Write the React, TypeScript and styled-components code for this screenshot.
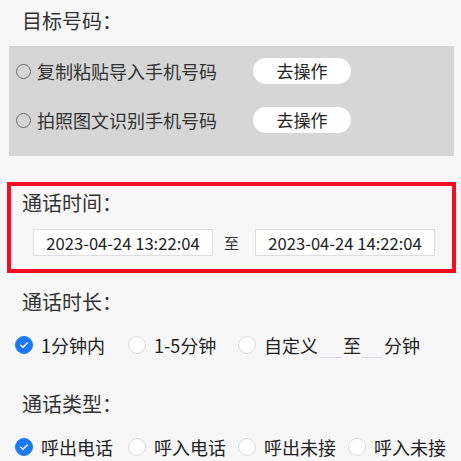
import React from 'react';
import styled, { createGlobalStyle } from 'styled-components';

const GlobalStyle = createGlobalStyle`
    html, body {
        margin: 0;
        padding: 0;
        background: #f7f7f7;
        font-family: 'Noto Sans CJK SC', 'Noto Sans', sans-serif;
        color: #333;
    }
    * { box-sizing: border-box; }
`;

// --- Layout ---

const Page = styled.div`
    width: 461px;
    padding-top: 7px;
`;

const SectionTitle = styled.div<{ $top?: number; $indent?: number }>`
    font-size: 20px;
    line-height: 28px;
    color: #333;
    padding-left: ${p => (p.$indent ?? 22)}px;
    margin-top: ${p => p.$top || 0}px;
`;

// --- Target numbers ---

const ImportBox = styled.div`
    margin: 11px 7px 0 9px;
    background: #d6d6d6;
    padding: 12px 0 23px 7px;
    display: flex;
    flex-direction: column;
    gap: 23px;
`;

const ImportRow = styled.div`
    display: flex;
    align-items: center;
    height: 26px;
`;

const ImportLabel = styled.label`
    width: 237px;
    display: flex;
    align-items: center;
    gap: 6px;
    font-size: 18px;
    color: #333;
`;

const HollowRadio = styled.span`
    width: 15px;
    height: 15px;
    border-radius: 50%;
    border: 1.5px solid #6a6a6a;
    flex-shrink: 0;
`;

const ActionButton = styled.button`
    width: 98px;
    height: 26px;
    border: none;
    border-radius: 13px;
    background: #fff;
    font-family: inherit;
    font-size: 17px;
    line-height: 26px;
    color: #222;
    padding: 0;
`;

// --- Call time ---

const TimeBox = styled.div`
    margin: 26px 5px 0 7px;
    border: 4px solid #f50c22;
    padding: 3px 0 13px 11px;
`;

const TimeRange = styled.div`
    display: flex;
    align-items: center;
    margin-top: 12px;
    padding-left: 11px;
`;

const DateField = styled.input`
    width: 180px;
    height: 27px;
    border: 1px solid #dedede;
    background: #fff;
    font-family: inherit;
    font-size: 16.6px;
    color: #222;
    text-align: center;
    padding: 0;
    outline: none;
`;

const RangeSep = styled.span`
    font-size: 15px;
    color: #333;
    margin: 0 16px 0 11px;
`;

// --- Options ---

const OptionRow = styled.div`
    display: flex;
    align-items: center;
    height: 28px;
    margin-top: 15px;
    padding-left: 15px;
    font-size: 18px;
    color: #222;
    white-space: nowrap;
`;

const Option = styled.label<{ $width?: number }>`
    display: flex;
    align-items: center;
    gap: 8px;
    width: ${p => (p.$width ? `${p.$width}px` : 'auto')};
    flex-shrink: 0;
`;

const Dot = styled.span<{ $checked?: boolean }>`
    width: 18px;
    height: 18px;
    border-radius: 50%;
    flex-shrink: 0;
    display: flex;
    align-items: center;
    justify-content: center;
    background: ${p => (p.$checked ? '#1a79f4' : '#fff')};
    border: 1px solid ${p => (p.$checked ? '#1a79f4' : '#dcdcdc')};
`;

const BlankInput = styled.span<{ $left?: number }>`
    display: inline-block;
    width: 22px;
    height: 27px;
    margin-left: ${p => p.$left || 0}px;
    border-bottom: 1.5px solid #d9dce6;
    align-self: flex-start;
`;

const Inline = styled.span<{ $left?: number }>`
    margin-left: ${p => p.$left || 0}px;
`;

const Check = () => (
    <svg width="10" height="10" viewBox="0 0 10 10">
        <polyline points="1.8,5.2 4,7.2 8.2,3" fill="none" stroke="#fff" strokeWidth="1.4" strokeLinecap="round" strokeLinejoin="round" />
    </svg>
);

const durations = ['1分钟内', '1-5分钟'];
const callTypes = ['呼出电话', '呼入电话', '呼出未接', '呼入未接'];

const App: React.FC = () => {
    return (
        <Page>
            <GlobalStyle />
            <SectionTitle>目标号码：</SectionTitle>
            <ImportBox>
                <ImportRow>
                    <ImportLabel><HollowRadio />复制粘贴导入手机号码</ImportLabel>
                    <ActionButton>去操作</ActionButton>
                </ImportRow>
                <ImportRow>
                    <ImportLabel><HollowRadio />拍照图文识别手机号码</ImportLabel>
                    <ActionButton>去操作</ActionButton>
                </ImportRow>
            </ImportBox>

            <TimeBox>
                <SectionTitle $indent={0}>通话时间：</SectionTitle>
                <TimeRange>
                    <DateField readOnly value="2023-04-24 13:22:04" />
                    <RangeSep>至</RangeSep>
                    <DateField readOnly value="2023-04-24 14:22:04" />
                </TimeRange>
            </TimeBox>

            <SectionTitle $top={15}>通话时长：</SectionTitle>
            <OptionRow>
                {durations.map((d, i) => (
                    <Option key={d} $width={i === 0 ? 113 : 110}>
                        <Dot $checked={i === 0}>{i === 0 && <Check />}</Dot>
                        {d}
                    </Option>
                ))}
                <Option>
                    <Dot />
                    自定义
                </Option>
                <BlankInput $left={2} />
                <Inline $left={1}>至</Inline>
                <BlankInput />
                <Inline $left={1}>分钟</Inline>
            </OptionRow>

            <SectionTitle $top={31}>通话类型：</SectionTitle>
            <OptionRow>
                {callTypes.map((t, i) => (
                    <Option key={t} $width={i === 3 ? undefined : i === 0 ? 113 : 110}>
                        <Dot $checked={i === 0}>{i === 0 && <Check />}</Dot>
                        {t}
                    </Option>
                ))}
            </OptionRow>
        </Page>
    );
};

export default App;
